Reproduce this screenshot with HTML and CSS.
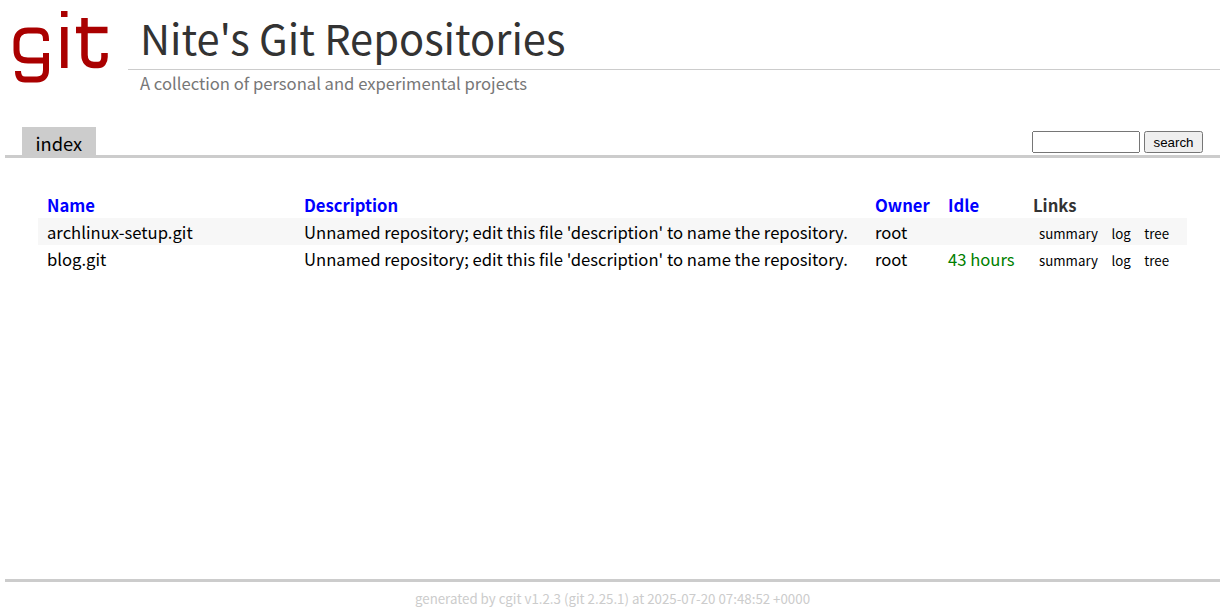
FILE: index.html
```html
<!DOCTYPE html>
<html lang="en">
<head>
  <meta charset="UTF-8" />
  <title>Nite's Git Repositories</title>
  <link rel="stylesheet" href="styles.css">
</head>
<body>
  <div class="cgit">
    <header class="site-header">
      <a class="logo" href="#">
        <svg width="123" height="93" viewBox="0 0 123 93">
          <g fill="none" stroke="#aa0000" stroke-width="6">
            <path d="M46 41V39C46 33 43 30.500 37 30.500H28C20 30.500 16.500 35 16.500 42V50C16.500 57 20 60.500 28 60.500H46" />
            <path d="M46 53V70C46 76 43 79.500 37 79.500H25C20 79.500 18 76 18 71" />
            <path d="M64.300 27V68" stroke-width="6.500" />
            <path d="M84.500 18V55C84.500 61 88 65 94 65H98C102 65 104.500 62 104.500 57V53" stroke-width="6.500" />
            <path d="M76 30H107.500" stroke-width="6.500" />
          </g>
          <rect x="61" y="11" width="6.500" height="6" fill="#aa0000" />
        </svg>
      </a>
      <div class="site-titles">
        <h1 class="site-name">Nite's Git Repositories</h1>
        <p class="site-desc">A collection of personal and experimental projects</p>
      </div>
    </header>

    <nav class="tabs">
      <a class="tab active" href="#">index</a>
      <form class="search-form">
        <input class="search-input" type="search" />
        <input class="search-btn" type="submit" value="search" />
      </form>
    </nav>

    <main class="content">
      <table class="repolist">
        <thead>
          <tr>
            <th class="col-name"><a href="#">Name</a></th>
            <th class="col-desc"><a href="#">Description</a></th>
            <th class="col-owner"><a href="#">Owner</a></th>
            <th class="col-idle"><a href="#">Idle</a></th>
            <th>Links</th>
          </tr>
        </thead>
        <tbody>
          <tr>
            <td><a href="#">archlinux-setup.git</a></td>
            <td><a href="#">Unnamed repository; edit this file 'description' to name the repository.</a></td>
            <td><a href="#">root</a></td>
            <td></td>
            <td class="links"><a href="#">summary</a><a href="#">log</a><a href="#">tree</a></td>
          </tr>
          <tr>
            <td><a href="#">blog.git</a></td>
            <td><a href="#">Unnamed repository; edit this file 'description' to name the repository.</a></td>
            <td><a href="#">root</a></td>
            <td class="age-hours">43 hours</td>
            <td class="links"><a href="#">summary</a><a href="#">log</a><a href="#">tree</a></td>
          </tr>
        </tbody>
      </table>
    </main>

    <footer class="site-footer">generated by <a href="#">cgit v1.2.3</a> (<a href="#">git 2.25.1</a>) at 2025-07-20 07:48:52 +0000</footer>
  </div>
</body>
</html>
```

FILE: styles.css
```css
html, body {
  margin: 0;
  height: 100%;
}

body {
  font-family: "Noto Sans CJK SC", "Noto Sans", sans-serif;
  font-size: 16.64px;
  color: #333;
  background: white;
  overflow: hidden;
}

a {
  color: inherit;
  text-decoration: none;
}

.cgit {
  padding: 0 5px;
}

.site-header {
  display: flex;
  height: 127px;
}

.logo {
  flex: 0 0 123px;
  height: 93px;
}

.logo svg {
  display: block;
  margin-left: -5px;
}

.site-titles {
  flex: 1;
}

.site-name {
  margin: 0;
  height: 69px;
  padding-left: 12px;
  font-size: 41.6px;
  font-weight: normal;
  line-height: 74px;
  border-bottom: 1px solid #ccc;
}

.site-desc {
  margin: 0;
  padding-left: 12px;
  font-size: 16.64px;
  line-height: 26px;
  color: #777;
}

.tabs {
  display: flex;
  justify-content: space-between;
  height: 28px;
  padding: 0 17px;
  border-bottom: 3px solid #ccc;
}

.tab {
  padding: 0 14px 0 13.5px;
  font-size: 18.3px;
  line-height: 32px;
  height: 28px;
  color: #000;
  background: #ccc;
}

.search-form {
  display: flex;
  align-items: flex-start;
  gap: 4px;
  padding-top: 4px;
}

.search-input {
  box-sizing: border-box;
  width: 108px;
  height: 22px;
  margin: 0;
}

.search-btn {
  box-sizing: border-box;
  width: 59px;
  height: 22px;
  margin: 0;
  padding: 0;
  font-family: "Liberation Sans", Arial, sans-serif;
  font-size: 13.33px;
}

.content {
  height: 424px;
  padding: 34px 33px 0;
  box-sizing: border-box;
  border-bottom: 3px solid #ccc;
}

.repolist {
  width: 100%;
  table-layout: fixed;
  border-collapse: collapse;
}

.repolist .col-name {
  width: 257px;
}

.repolist .col-desc {
  width: 571px;
}

.repolist .col-owner {
  width: 73px;
}

.repolist .col-idle {
  width: 85px;
}

.repolist th {
  box-sizing: border-box;
  height: 26px;
  padding: 0 9px;
  font-weight: bold;
  text-align: left;
  white-space: nowrap;
}

.repolist th a {
  color: blue;
}

.repolist td {
  height: 27px;
  padding: 0 9px;
  color: #000;
  white-space: nowrap;
}

.repolist tbody tr:nth-child(odd) {
  background: #f7f7f7;
}

.repolist td.age-hours {
  color: #008000;
}

.repolist td.links {
  font-size: 13.31px;
  padding-left: 15px;
  padding-top: 4px;
  box-sizing: border-box;
}

.links a {
  margin-right: 13.5px;
}

.site-footer {
  padding-top: 7px;
  font-size: 13.31px;
  line-height: 20px;
  text-align: center;
  color: #ccc;
}
```
